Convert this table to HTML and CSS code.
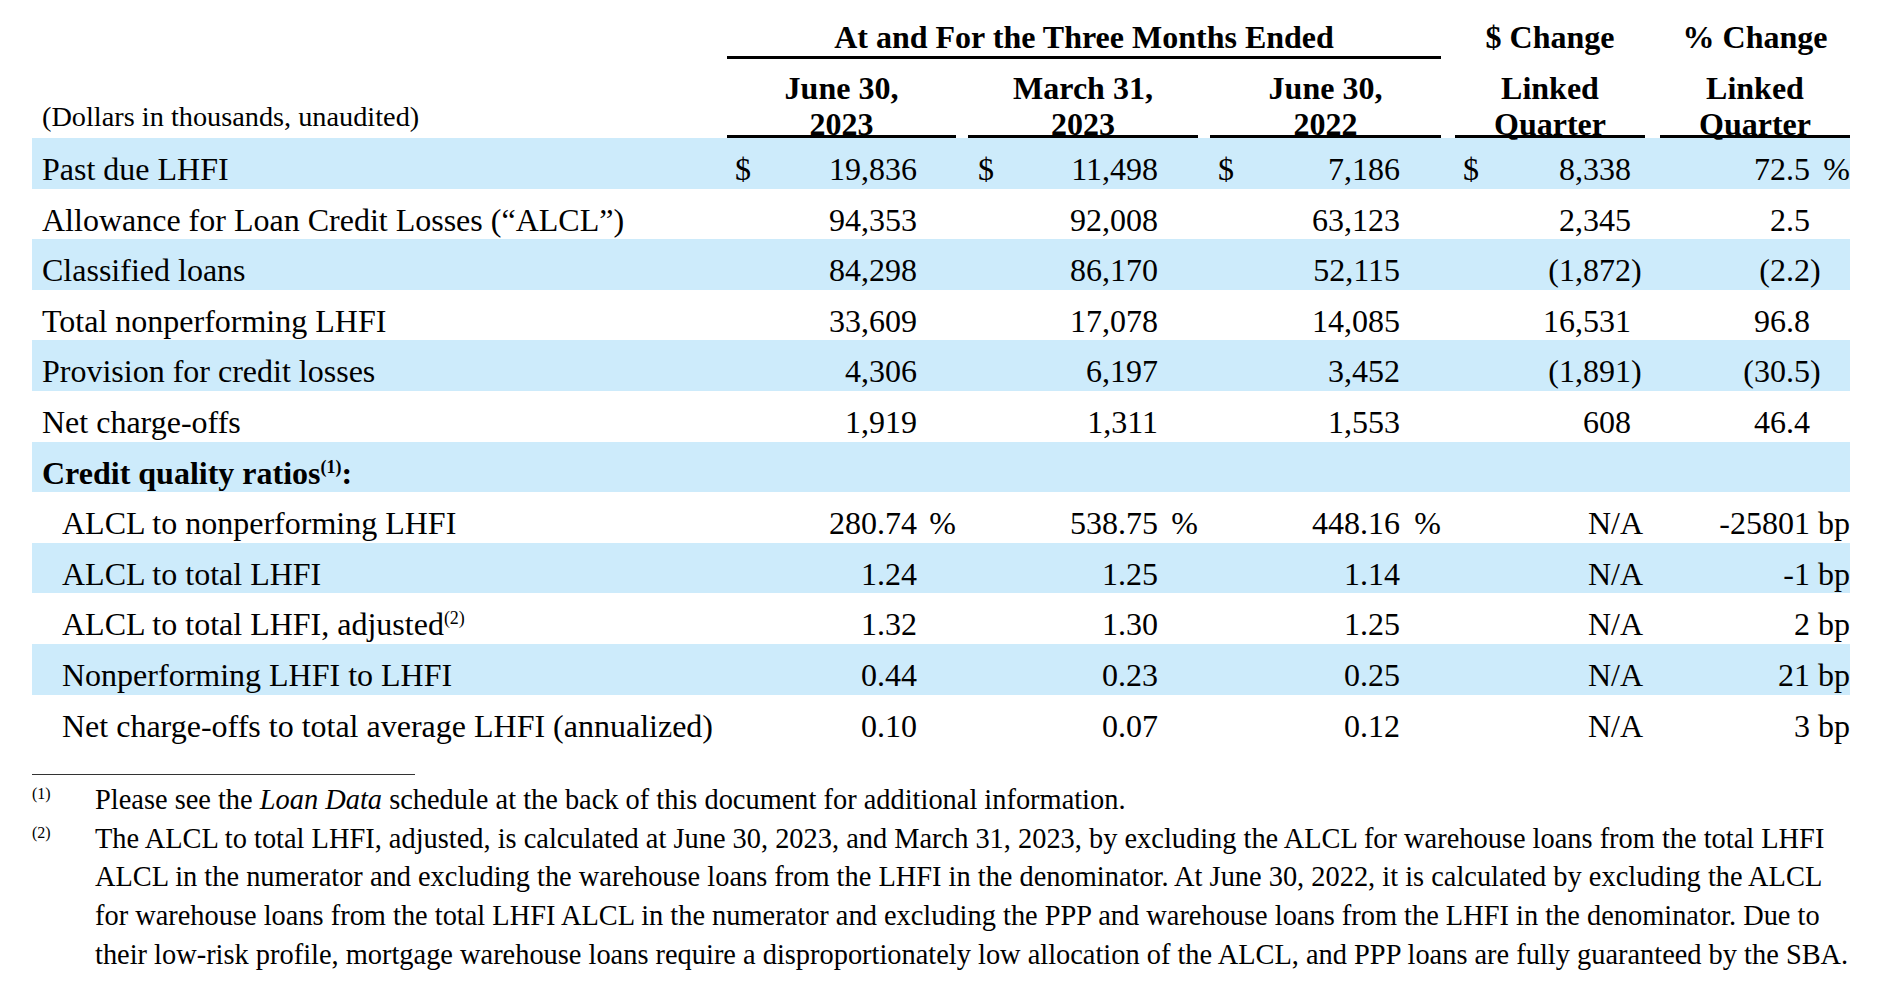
FILE: index.html
```html
<!DOCTYPE html>
<html lang="en">
<head>
<meta charset="utf-8">
<title>Credit Quality</title>
<link rel="stylesheet" href="styles.css">
</head>
<body>
<div class="page">
  <div class="table">
    <div class="row head1">
      <div class="lab"></div>
      <div class="grp">At and For the Three Months Ended</div>
      <div class="hc c4">$ Change</div>
      <div class="hc c5">% Change</div>
    </div>
    <div class="row head2">
      <div class="lab unit">(Dollars in thousands, unaudited)</div>
      <div class="hc2 c1">June 30,<br>2023</div>
      <div class="hc2 c2">March 31,<br>2023</div>
      <div class="hc2 c3">June 30,<br>2022</div>
      <div class="hc2 c4">Linked<br>Quarter</div>
      <div class="hc2 c5">Linked<br>Quarter</div>
    </div>

    <div class="row band">
      <div class="lab">Past due LHFI</div>
      <div class="num c1"><span class="cur">$</span><span class="v">19,836</span><span class="sfx"></span></div>
      <div class="num c2"><span class="cur">$</span><span class="v">11,498</span><span class="sfx"></span></div>
      <div class="num c3"><span class="cur">$</span><span class="v">7,186</span><span class="sfx"></span></div>
      <div class="num c4"><span class="cur">$</span><span class="v">8,338</span><span class="sfx"></span></div>
      <div class="num c5"><span class="v">72.5</span><span class="sfx"> %</span></div>
    </div>
    <div class="row">
      <div class="lab">Allowance for Loan Credit Losses (“ALCL”)</div>
      <div class="num c1"><span class="v">94,353</span><span class="sfx"></span></div>
      <div class="num c2"><span class="v">92,008</span><span class="sfx"></span></div>
      <div class="num c3"><span class="v">63,123</span><span class="sfx"></span></div>
      <div class="num c4"><span class="v">2,345</span><span class="sfx"></span></div>
      <div class="num c5"><span class="v">2.5</span><span class="sfx"></span></div>
    </div>
    <div class="row band">
      <div class="lab">Classified loans</div>
      <div class="num c1"><span class="v">84,298</span><span class="sfx"></span></div>
      <div class="num c2"><span class="v">86,170</span><span class="sfx"></span></div>
      <div class="num c3"><span class="v">52,115</span><span class="sfx"></span></div>
      <div class="num c4"><span class="v">(1,872</span><span class="sfx paren">)</span></div>
      <div class="num c5"><span class="v">(2.2</span><span class="sfx paren">)</span></div>
    </div>
    <div class="row">
      <div class="lab">Total nonperforming LHFI</div>
      <div class="num c1"><span class="v">33,609</span><span class="sfx"></span></div>
      <div class="num c2"><span class="v">17,078</span><span class="sfx"></span></div>
      <div class="num c3"><span class="v">14,085</span><span class="sfx"></span></div>
      <div class="num c4"><span class="v">16,531</span><span class="sfx"></span></div>
      <div class="num c5"><span class="v">96.8</span><span class="sfx"></span></div>
    </div>
    <div class="row band">
      <div class="lab">Provision for credit losses</div>
      <div class="num c1"><span class="v">4,306</span><span class="sfx"></span></div>
      <div class="num c2"><span class="v">6,197</span><span class="sfx"></span></div>
      <div class="num c3"><span class="v">3,452</span><span class="sfx"></span></div>
      <div class="num c4"><span class="v">(1,891</span><span class="sfx paren">)</span></div>
      <div class="num c5"><span class="v">(30.5</span><span class="sfx paren">)</span></div>
    </div>
    <div class="row">
      <div class="lab">Net charge-offs</div>
      <div class="num c1"><span class="v">1,919</span><span class="sfx"></span></div>
      <div class="num c2"><span class="v">1,311</span><span class="sfx"></span></div>
      <div class="num c3"><span class="v">1,553</span><span class="sfx"></span></div>
      <div class="num c4"><span class="v">608</span><span class="sfx"></span></div>
      <div class="num c5"><span class="v">46.4</span><span class="sfx"></span></div>
    </div>
    <div class="row band">
      <div class="lab bold">Credit quality ratios<sup class="sup">(1)</sup>:</div>
    </div>
    <div class="row">
      <div class="lab ind">ALCL to nonperforming LHFI</div>
      <div class="num c1"><span class="v">280.74</span><span class="sfx"> %</span></div>
      <div class="num c2"><span class="v">538.75</span><span class="sfx"> %</span></div>
      <div class="num c3"><span class="v">448.16</span><span class="sfx"> %</span></div>
      <div class="num c4 na"><span class="v">N/A</span></div>
      <div class="num c5"><span class="v">-25801</span><span class="sfx"> bp</span></div>
    </div>
    <div class="row band">
      <div class="lab ind">ALCL to total LHFI</div>
      <div class="num c1"><span class="v">1.24</span><span class="sfx"></span></div>
      <div class="num c2"><span class="v">1.25</span><span class="sfx"></span></div>
      <div class="num c3"><span class="v">1.14</span><span class="sfx"></span></div>
      <div class="num c4 na"><span class="v">N/A</span></div>
      <div class="num c5"><span class="v">-1</span><span class="sfx"> bp</span></div>
    </div>
    <div class="row">
      <div class="lab ind">ALCL to total LHFI, adjusted<sup class="sup">(2)</sup></div>
      <div class="num c1"><span class="v">1.32</span><span class="sfx"></span></div>
      <div class="num c2"><span class="v">1.30</span><span class="sfx"></span></div>
      <div class="num c3"><span class="v">1.25</span><span class="sfx"></span></div>
      <div class="num c4 na"><span class="v">N/A</span></div>
      <div class="num c5"><span class="v">2</span><span class="sfx"> bp</span></div>
    </div>
    <div class="row band">
      <div class="lab ind">Nonperforming LHFI to LHFI</div>
      <div class="num c1"><span class="v">0.44</span><span class="sfx"></span></div>
      <div class="num c2"><span class="v">0.23</span><span class="sfx"></span></div>
      <div class="num c3"><span class="v">0.25</span><span class="sfx"></span></div>
      <div class="num c4 na"><span class="v">N/A</span></div>
      <div class="num c5"><span class="v">21</span><span class="sfx"> bp</span></div>
    </div>
    <div class="row">
      <div class="lab ind">Net charge-offs to total average LHFI (annualized)</div>
      <div class="num c1"><span class="v">0.10</span><span class="sfx"></span></div>
      <div class="num c2"><span class="v">0.07</span><span class="sfx"></span></div>
      <div class="num c3"><span class="v">0.12</span><span class="sfx"></span></div>
      <div class="num c4 na"><span class="v">N/A</span></div>
      <div class="num c5"><span class="v">3</span><span class="sfx"> bp</span></div>
    </div>
  </div>

  <div class="rule"></div>

  <div class="notes">
    <div class="mark"><span class="mk">(1)</span></div>
    <div class="note">Please see the <i>Loan Data</i> schedule at the back of this document for additional information.</div>
    <div class="mark"><span class="mk">(2)</span></div>
    <div class="note">The ALCL to total LHFI, adjusted, is calculated at June 30, 2023, and March 31, 2023, by excluding the ALCL for warehouse loans from the total LHFI ALCL in the numerator and excluding the warehouse loans from the LHFI in the denominator. At June 30, 2022, it is calculated by excluding the ALCL for warehouse loans from the total LHFI ALCL in the numerator and excluding the PPP and warehouse loans from the LHFI in the denominator. Due to their low-risk profile, mortgage warehouse loans require a disproportionately low allocation of the ALCL, and PPP loans are fully guaranteed by the SBA.</div>
  </div>
</div>
</body>
</html>
```

FILE: styles.css
```css
html, body {
  margin: 0;
  padding: 0;
  background: #ffffff;
}

body {
  font-family: "Liberation Serif", "Times New Roman", serif;
  color: #000000;
}

.page {
  padding-left: 32px;
  width: 1818px;
}

.row {
  display: grid;
  grid-template-columns: 695px 229px 242px 243px 204px 205px;
  font-size: 32px;
}

.band {
  background: #cdebfb;
}

/* header rows */
.head1 {
  font-weight: bold;
  line-height: 36px;
}

.grp {
  grid-column: 2 / 5;
  text-align: center;
  padding-top: 19px;
  padding-bottom: 1px;
  border-bottom: 3px solid #000;
}

.hc {
  text-align: center;
  padding-top: 19px;
}

.hc.c4 { margin-left: 14px; }
.hc.c5 { margin-left: 15px; }

.head2 {
  font-weight: bold;
}

.hc2 {
  text-align: center;
  padding-top: 11px;
  line-height: 36px;
  height: 65px;
  border-bottom: 3px solid #000;
}

.hc2.c2 { margin-left: 12px; }
.hc2.c3 { margin-left: 12px; }
.hc2.c4 { margin-left: 14px; }
.hc2.c5 { margin-left: 15px; }

.unit {
  align-self: end;
  font-weight: normal;
  font-size: 28.3px;
  line-height: 32px;
  padding-bottom: 5px;
}

/* body rows */
.lab {
  padding-left: 10px;
  white-space: nowrap;
}

.row:not(.head1):not(.head2) > div {
  padding-top: 12px;
  line-height: 38.6px;
}

.lab.ind {
  padding-left: 30px;
}

.lab.bold {
  font-weight: bold;
}

.sup {
  font-size: 18px;
  line-height: 1;
  vertical-align: 11px;
}

.num {
  display: flex;
  white-space: pre;
}

.num .cur {
  flex: none;
}

.num .v {
  flex: 1;
  text-align: right;
}

.num .sfx {
  flex: none;
  text-align: right;
}

.num .sfx.paren {
  text-align: left;
}

.num.c1 { padding-left: 8px; }
.num.c1 .sfx { width: 39px; }
.num.c2 { padding-left: 22px; }
.num.c2 .sfx { width: 40px; }
.num.c3 { padding-left: 20px; }
.num.c3 .sfx { width: 41px; }
.num.c4 { padding-left: 22px; }
.num.c4 .sfx { width: 14px; }
.num.c5 .sfx { width: 40px; }
.num.na { padding-right: 2px; }

/* footnotes */
.rule {
  width: 383px;
  height: 1px;
  background: #333333;
  margin-top: 29px;
}

.notes {
  display: grid;
  grid-template-columns: 63px 1755px;
  font-size: 28.4px;
  line-height: 38.8px;
  margin-top: 5.7px;
}

.mk {
  font-size: 16px;
  line-height: 1;
  vertical-align: 10.5px;
}
```
